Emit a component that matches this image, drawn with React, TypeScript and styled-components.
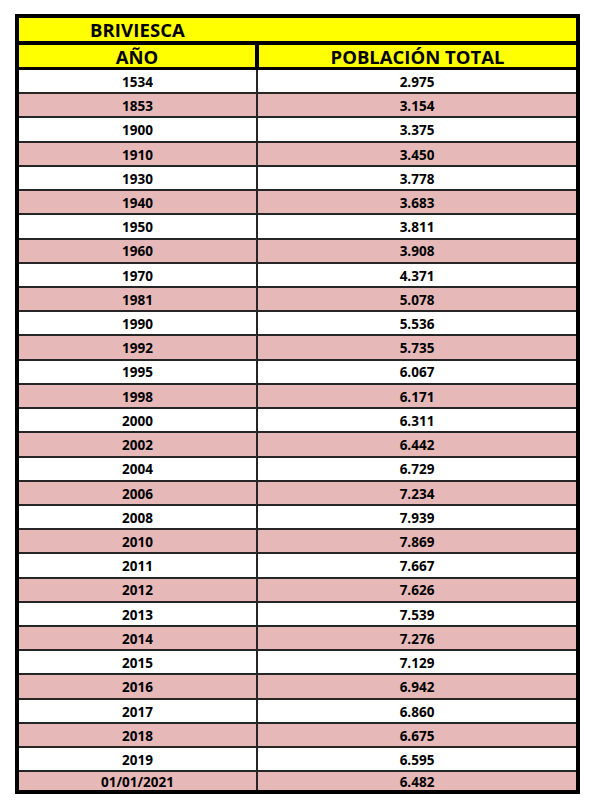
import React from "react";
import styled, { createGlobalStyle } from "styled-components";

const GlobalStyle = createGlobalStyle`
  html, body {
    margin: 0;
    padding: 0;
    background: #ffffff;
  }
  body {
    font-family: "Open Sans", "Noto Sans", "Liberation Sans", sans-serif;
    color: #000;
  }
`;

const Sheet = styled.div`
  box-sizing: border-box;
  width: 565px;
  margin: 14px 0 0 15px;
  border: 4px solid #000;
  display: flex;
  flex-direction: column;
`;

const TitleRow = styled.div`
  height: 22px;
  background: #ffff00;
  border-bottom: 4px solid #000;
  padding-left: 71px;
  display: flex;
  align-items: center;
  font-size: 18.5px;
  font-weight: 700;
  letter-spacing: 0.1px;
  line-height: 1;
  padding-top: 1px;
`;

const HeaderRow = styled.div`
  display: grid;
  grid-template-columns: 240px 1fr;
  height: 22px;
  background: #ffff00;
  border-bottom: 3px solid #000;
`;

const HeaderCell = styled.div<{ $divider?: boolean }>`
  box-sizing: border-box;
  display: flex;
  align-items: center;
  justify-content: center;
  font-size: 18.5px;
  font-weight: 700;
  line-height: 1;
  padding-top: 3px;
  border-right: ${(p) => (p.$divider ? "4px solid #000" : "none")};
`;

const DataRow = styled.div<{ $shaded: boolean; $last: boolean }>`
  box-sizing: border-box;
  display: grid;
  grid-template-columns: 239px 1fr;
  height: ${(p) => (p.$last ? "18px" : "24.23px")};
  background: ${(p) => (p.$shaded ? "#e6b8b7" : "#ffffff")};
  border-bottom: ${(p) => (p.$last ? "none" : "2px solid #262626")};
`;

const Cell = styled.div<{ $divider?: boolean }>`
  box-sizing: border-box;
  display: flex;
  align-items: center;
  justify-content: center;
  font-size: 13.5px;
  font-weight: 700;
  line-height: 1;
  padding-top: 3px;
  border-right: ${(p) => (p.$divider ? "2px solid #262626" : "none")};
`;

const rows: [string, string][] = [
  ["1534", "2.975"],
  ["1853", "3.154"],
  ["1900", "3.375"],
  ["1910", "3.450"],
  ["1930", "3.778"],
  ["1940", "3.683"],
  ["1950", "3.811"],
  ["1960", "3.908"],
  ["1970", "4.371"],
  ["1981", "5.078"],
  ["1990", "5.536"],
  ["1992", "5.735"],
  ["1995", "6.067"],
  ["1998", "6.171"],
  ["2000", "6.311"],
  ["2002", "6.442"],
  ["2004", "6.729"],
  ["2006", "7.234"],
  ["2008", "7.939"],
  ["2010", "7.869"],
  ["2011", "7.667"],
  ["2012", "7.626"],
  ["2013", "7.539"],
  ["2014", "7.276"],
  ["2015", "7.129"],
  ["2016", "6.942"],
  ["2017", "6.860"],
  ["2018", "6.675"],
  ["2019", "6.595"],
  ["01/01/2021", "6.482"],
];

export default function App() {
  return (
    <>
      <GlobalStyle />
      <Sheet>
        <TitleRow>BRIVIESCA</TitleRow>
        <HeaderRow>
          <HeaderCell $divider>AÑO</HeaderCell>
          <HeaderCell>POBLACIÓN TOTAL</HeaderCell>
        </HeaderRow>
        {rows.map(([year, total], i) => (
          <DataRow key={year} $shaded={i % 2 === 1} $last={i === rows.length - 1}>
            <Cell $divider>{year}</Cell>
            <Cell>{total}</Cell>
          </DataRow>
        ))}
      </Sheet>
    </>
  );
}
